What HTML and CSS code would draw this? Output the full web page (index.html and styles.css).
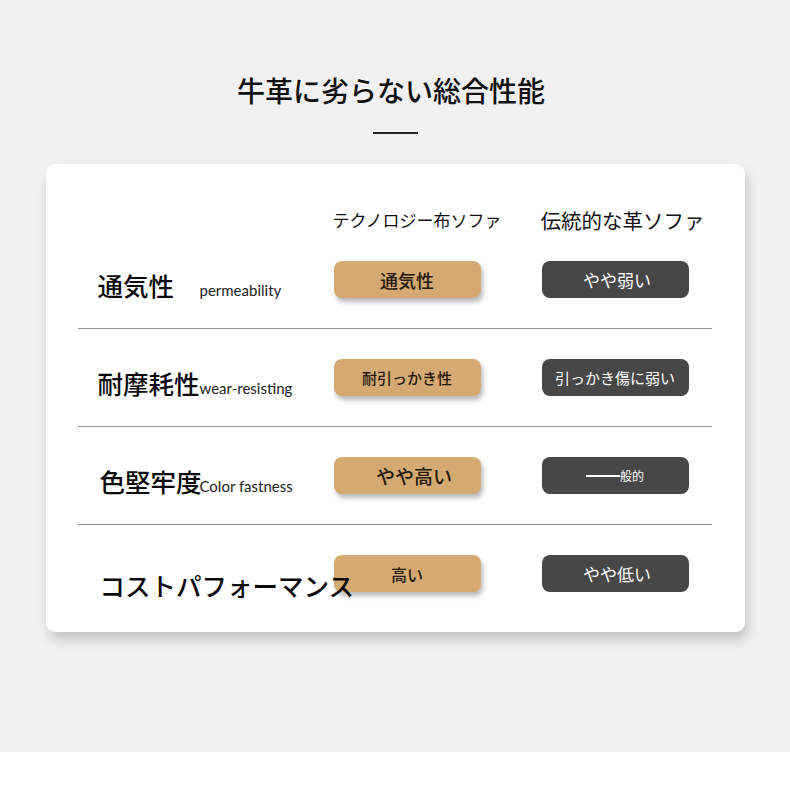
FILE: index.html
```html
<!DOCTYPE html>
<html lang="ja">
<head>
<meta charset="utf-8">
<title>牛革に劣らない総合性能</title>
<link rel="stylesheet" href="styles.css">
</head>
<body>
<div class="page">
  <h1 class="title">牛革に劣らない総合性能</h1>
  <div class="underline"></div>
  <div class="card">
    <div class="head">
      <div></div>
      <div class="head-a">テクノロジー布ソファ</div>
      <div class="head-b">伝統的な革ソファ</div>
    </div>
    <div class="row">
      <div class="label"><span class="jp">通気性</span><span class="en">permeability</span></div>
      <div class="pill gold">通気性</div>
      <div class="pill dark">やや弱い</div>
    </div>
    <div class="row">
      <div class="label"><span class="jp">耐摩耗性</span><span class="en">wear-resisting</span></div>
      <div class="pill gold small">耐引っかき性</div>
      <div class="pill dark small">引っかき傷に弱い</div>
    </div>
    <div class="row">
      <div class="label shift"><span class="jp">色堅牢度</span><span class="en">Color fastness</span></div>
      <div class="pill gold big">やや高い</div>
      <div class="pill dark tiny"><span class="dash"></span>般的</div>
    </div>
    <div class="row last">
      <div class="label shift"><span class="jp">コストパフォーマンス</span></div>
      <div class="pill gold mid">高い</div>
      <div class="pill dark">やや低い</div>
    </div>
  </div>
</div>
</body>
</html>
```
FILE: styles.css
```css
html, body {
  margin: 0;
  padding: 0;
  background: #ffffff;
}
body {
  font-family: "Noto Sans CJK JP", "Noto Sans", sans-serif;
  color: #111;
}
.page {
  height: 752px;
  background: #f1f1f1;
  padding-top: 70px;
  box-sizing: border-box;
  display: flex;
  flex-direction: column;
  align-items: center;
}
.title {
  margin: 0;
  padding-right: 8px;
  font-size: 28px;
  line-height: 40px;
  font-weight: 500;
  color: #111;
}
.underline {
  width: 45px;
  height: 2px;
  background: #222;
  margin-top: 22px;
}
.card {
  margin-top: 30px;
  width: 699px;
  box-sizing: border-box;
  background: #fff;
  border-radius: 9px;
  box-shadow: 3px 8px 12px rgba(0, 0, 0, 0.18);
  padding: 44px 33px 10px 32px;
}
.head, .row {
  display: grid;
  grid-template-columns: 256px 208px 147px;
  column-gap: 0;
  align-items: center;
}
.head {
  height: 24px;
  white-space: nowrap;
}
.head-a {
  font-size: 17px;
  line-height: 24px;
  margin-left: -1px;
}
.head-b {
  font-size: 20.5px;
  line-height: 24px;
  margin-left: -1px;
}
.row {
  padding: 29px 0 30px;
  border-bottom: 1px solid #9c958b;
}
.row + .row {
  padding-top: 30px;
}
.row.last {
  border-bottom: none;
}
.label {
  position: relative;
  z-index: 1;
  align-self: end;
  white-space: nowrap;
  padding-left: 20px;
  display: flex;
  align-items: baseline;
}
.label.shift {
  padding-left: 22px;
}
.jp {
  display: inline-block;
  width: 102px;
  font-size: 25.5px;
  font-weight: 500;
  line-height: 15px;
  color: #0a0a0a;
}
.label.shift .jp {
  width: 100px;
}
.en {
  font-family: "Lato", "Noto Sans", sans-serif;
  font-size: 15px;
  line-height: 15px;
  color: #222;
}
.pill {
  width: 147px;
  height: 37px;
  border-radius: 8px;
  display: flex;
  align-items: center;
  justify-content: center;
  white-space: nowrap;
  font-size: 17px;
}
.gold {
  background: #d4aa72;
  color: #24190f;
  font-size: 18px;
  font-weight: 500;
  box-shadow: 2px 4px 5px rgba(0, 0, 0, 0.28);
}
.gold.small {
  font-size: 15px;
}
.gold.big {
  font-size: 19px;
  padding-left: 14px;
  box-sizing: border-box;
}
.gold.mid {
  font-size: 16px;
}
.dark {
  background: #474747;
  color: #fff;
  padding-left: 4px;
  box-sizing: border-box;
}
.dark.small {
  font-size: 15px;
  padding-left: 0;
}
.dark.tiny {
  font-size: 12px;
  padding-left: 0;
}
.dash {
  display: inline-block;
  width: 34px;
  height: 2px;
  background: #fff;
}
```
